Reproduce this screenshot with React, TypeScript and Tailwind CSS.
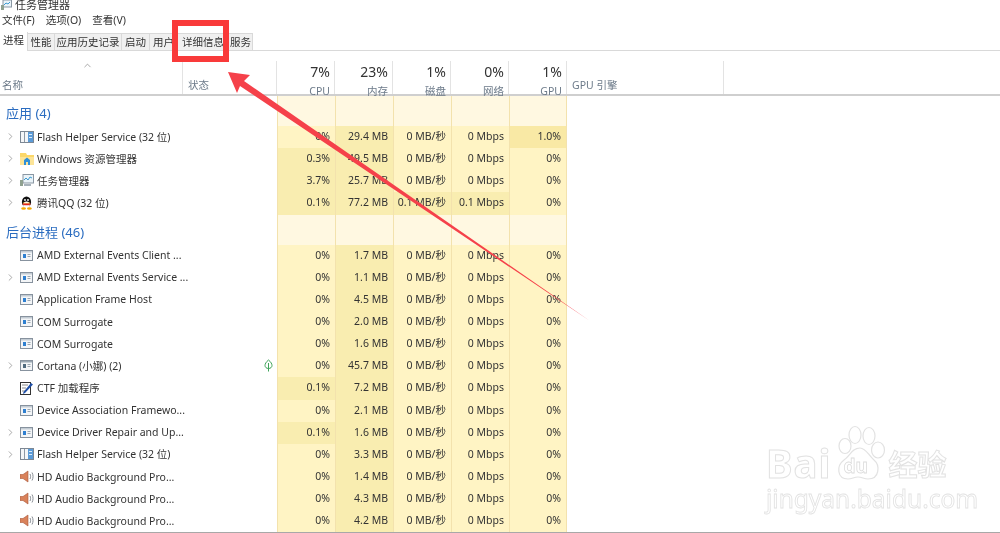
import { ChevronRight, ChevronUp } from "lucide-react";

type IconKind = "flash" | "folder" | "task" | "qq" | "service" | "cortana" | "ctf" | "audio";
type Row = { name: string; icon: IconKind; exp?: boolean; leaf?: boolean; v: string[]; d: number[] };

const apps: Row[] = [
  { name: "Flash Helper Service (32 位)", icon: "flash", exp: true, v: ["0%", "29.4 MB", "0 MB/秒", "0 Mbps", "1.0%"], d: [1, 4] },
  { name: "Windows 资源管理器", icon: "folder", exp: true, v: ["0.3%", "49.5 MB", "0 MB/秒", "0 Mbps", "0%"], d: [0, 1] },
  { name: "任务管理器", icon: "task", exp: true, v: ["3.7%", "25.7 MB", "0 MB/秒", "0 Mbps", "0%"], d: [0, 1] },
  { name: "腾讯QQ (32 位)", icon: "qq", exp: true, v: ["0.1%", "77.2 MB", "0.1 MB/秒", "0.1 Mbps", "0%"], d: [0, 1, 2, 3] },
];

const bg = (name: string, icon: IconKind, cpu: string, mem: string, exp = false, leaf = false): Row => ({
  name,
  icon,
  exp,
  leaf,
  v: [cpu, mem, "0 MB/秒", "0 Mbps", "0%"],
  d: cpu === "0%" ? [1] : [0, 1],
});

const background: Row[] = [
  bg("AMD External Events Client ...", "service", "0%", "1.7 MB"),
  bg("AMD External Events Service ...", "service", "0%", "1.1 MB", true),
  bg("Application Frame Host", "service", "0%", "4.5 MB"),
  bg("COM Surrogate", "service", "0%", "2.0 MB"),
  bg("COM Surrogate", "service", "0%", "1.6 MB"),
  bg("Cortana (小娜) (2)", "cortana", "0%", "45.7 MB", true, true),
  bg("CTF 加载程序", "ctf", "0.1%", "7.2 MB"),
  bg("Device Association Framewo...", "service", "0%", "2.1 MB"),
  bg("Device Driver Repair and Up...", "service", "0.1%", "1.6 MB", true),
  bg("Flash Helper Service (32 位)", "flash", "0%", "3.3 MB", true),
  bg("HD Audio Background Pro...", "audio", "0%", "1.4 MB"),
  bg("HD Audio Background Pro...", "audio", "0%", "4.3 MB"),
  bg("HD Audio Background Pro...", "audio", "0%", "4.2 MB"),
];

const cols = ["w-[58px]", "w-[58px]", "w-[58px]", "w-[58px]", "w-[57px]"];
const tabs = [
  ["进程", "w-[28px]"],
  ["性能", "w-[27px]"],
  ["应用历史记录", "w-[67px]"],
  ["启动", "w-[28px]"],
  ["用户", "w-[28px]"],
  ["详细信息", "w-[51px]"],
  ["服务", "w-[24px]"],
];

function Icon({ kind }: { kind: IconKind }) {
  if (kind === "flash")
    return (
      <svg width="14" height="12" viewBox="0 0 14 12">
        <rect x="0.5" y="0.5" width="13" height="11" fill="#f4f6f8" stroke="#7c8794" />
        <rect x="4" y="1" width="1" height="10" fill="#8d98a5" />
        <rect x="8" y="1" width="5" height="10" fill="#5b9bd8" />
        <rect x="9" y="3" width="3" height="1" fill="#dcebf8" />
        <rect x="9" y="6" width="3" height="1" fill="#dcebf8" />
      </svg>
    );
  if (kind === "folder")
    return (
      <svg width="14" height="13" viewBox="0 0 14 13">
        <path d="M0 1h6l1 2h7v10H0z" fill="#fbd769" />
        <path d="M0 5h14v8H0z" fill="#fce498" />
        <path d="M4 13V8l3-2.5L10 8v5H8v-3H6v3z" fill="#2f8fd8" />
      </svg>
    );
  if (kind === "task")
    return (
      <svg width="14" height="13" viewBox="0 0 14 13">
        <rect x="3" y="0.5" width="10.5" height="8.5" fill="#eaf3f8" stroke="#8a97a3" />
        <path d="M4 6l2-2 2 2 2-3 2 1" fill="none" stroke="#3c9ad0" />
        <rect x="0" y="6" width="3" height="6" fill="#8fa08f" />
        <rect x="4" y="10" width="7" height="2" fill="#a7b2bb" />
      </svg>
    );
  if (kind === "qq")
    return (
      <svg width="13" height="14" viewBox="0 0 13 14">
        <ellipse cx="6.5" cy="6" rx="4.6" ry="5.6" fill="#111" />
        <ellipse cx="6.5" cy="9" rx="3.3" ry="3.4" fill="#fff" />
        <circle cx="5" cy="4" r="0.9" fill="#fff" />
        <circle cx="8" cy="4" r="0.9" fill="#fff" />
        <path d="M3 6.2c2 1 5 1 7 0l-.6 1.4H3.6z" fill="#f5b400" />
        <path d="M2.6 7.4h7.8l.2 1.2-2 .6H4.400l-2-.6z" fill="#e0261c" />
        <ellipse cx="3.600" cy="12.500" rx="2.400" ry="1.300" fill="#f5a800" />
        <ellipse cx="9.400" cy="12.500" rx="2.400" ry="1.300" fill="#f5a800" />
      </svg>
    );
  if (kind === "ctf")
    return (
      <svg width="13" height="14" viewBox="0 0 13 14">
        <rect x="0.500" y="1.500" width="10" height="12" fill="#fff" stroke="#333" />
        <path d="M2 4h6M2 7h4M2 10h3" stroke="#8a8a8a" />
        <path d="M3.500 11L11 2l2 1.500L5 12l-2 1z" fill="#1f4fa8" />
      </svg>
    );
  if (kind === "audio")
    return (
      <svg width="14" height="13" viewBox="0 0 14 13">
        <path d="M0 4.500h3L8 1v11L3 8.500H0z" fill="#d9825b" stroke="#a9583a" strokeWidth="0.600" />
        <path d="M10 4c.8 1.500.8 3.500 0 5M12 2.500c1.400 2.500 1.400 5.500 0 8" fill="none" stroke="#8a8f96" />
      </svg>
    );
  return (
    <svg width="13" height="11" viewBox="0 0 13 11">
      <rect x="0.500" y="0.500" width="12" height="10" fill="#f3f5f7" stroke="#87929e" />
      <rect x="1" y="1" width="11" height="1.500" fill={kind === "cortana" ? "#9aa7b2" : "#c3ccd4"} />
      <rect x="3" y="4" width="3" height="4" fill={kind === "cortana" ? "#4f6a7e" : "#2e7fd0"} />
      <path d="M7.500 4.500h3M7.500 6.500h3" stroke="#9aa5af" />
    </svg>
  );
}

function Leaf() {
  return (
    <svg width="9" height="13" viewBox="0 0 9 13" className="text-[#3fa45a]">
      <path d="M4.500 1C2 3 1 5 1 6.500 1 8.300 2.500 9.500 4.500 9.500S8 8.300 8 6.500C8 5 7 3 4.500 1z" fill="none" stroke="currentColor" />
      <path d="M4.500 4v8.500" stroke="currentColor" />
    </svg>
  );
}

function TableRow({ r }: { r: Row }) {
  return (
    <div className="flex h-[22.15px] text-[10.5px] leading-[20px] text-[#333]">
      <div className="flex w-[277px] items-center pb-[1px]">
        <div className="flex w-[20px] justify-center pl-[1px]">
          {r.exp && <ChevronRight size={11} strokeWidth={1.6} className="text-[#8a8a8a]" />}
        </div>
        <div className="flex w-[17px] justify-start">
          <Icon kind={r.icon} />
        </div>
        <span className="flex-1 truncate">{r.name}</span>
        {r.leaf && (
          <div className="mr-[4px] flex">
            <Leaf />
          </div>
        )}
      </div>
      {r.v.map((val, i) => (
        <div
          key={i}
          className={`${cols[i]} border-l border-[#f3e2ad] pr-[5px] text-right ${
            r.d.includes(i) ? (i === 4 ? "bg-[#f9e9a5]" : "bg-[#f9edb0]") : "bg-[#fff4c4]"
          }`}
        >
          {val}
        </div>
      ))}
      <div className="w-px bg-[#f3e2ad]" />
    </div>
  );
}

function Band({ label }: { label: string }) {
  return (
    <div className="flex h-[30px]">
      <div className="w-[277px] pl-[6px] pt-[7px] text-[13px] leading-[20px] text-[#2a6cc0]">{label}</div>
      {cols.map((c) => (
        <div key={c + label + Math.random()} className={`${c} border-l border-[#f3e2ad] bg-[#fff8e1]`} />
      ))}
      <div className="w-px bg-[#f3e2ad]" />
    </div>
  );
}

function HeadCol({ pct, label, w }: { pct: string; label: string; w: string }) {
  return (
    <div className={`${w} flex flex-col items-end border-r border-[#e3e3e3] pr-[4px] pt-[1px]`}>
      <div className="text-[14px] leading-[20px] text-[#333]">{pct}</div>
      <div className="mt-[1px] text-[10.5px] leading-[16px] text-[#6c7a89]">{label}</div>
    </div>
  );
}

function Watermark() {
  return (
    <div className="absolute left-[766px] top-[424px] flex w-[190px] flex-col text-white">
      <div className="flex items-end">
        <span className="text-[40px] font-bold leading-[46px] tracking-[1px] [-webkit-text-stroke:1px_#e2e2e2]">Bai</span>
        <div className="relative ml-[-1px] h-[62px] w-[56px]">
          <svg width="56" height="62" viewBox="0 0 56 62" className="absolute left-0 top-0">
            <g fill="#fff" stroke="#e2e2e2" strokeWidth="1.200">
              <ellipse cx="14" cy="22" rx="6" ry="7.500" />
              <ellipse cx="24" cy="11" rx="6" ry="8.500" />
              <ellipse cx="38" cy="12" rx="6" ry="8.500" />
              <ellipse cx="47" cy="26" rx="6.500" ry="8" />
              <path d="M29 24c6 0 9 8 14 12 6 5 6 19-6 19-4 0-6-2-10-2s-6 2-10 2C6 55 5 42 13 36c6-4 8-12 16-12z" />
            </g>
          </svg>
          <span className="absolute left-[13px] top-[31px] text-[19px] font-bold leading-[22px] text-white [-webkit-text-stroke:0.8px_#dcdcdc]">du</span>
        </div>
        <span className="ml-[2px] font-['Noto_Sans_CJK_SC'] text-[29px] font-bold leading-[46px] [-webkit-text-stroke:1px_#e2e2e2]">经验</span>
      </div>
      <div className="mt-[-1px] text-[24.5px] leading-[28px] [-webkit-text-stroke:0.8px_#e2e2e2]">jingyan.baidu.com</div>
    </div>
  );
}

export default function App() {
  return (
    <div className="relative h-[533px] w-[1000px] overflow-hidden bg-white font-['Noto_Sans','Noto_Sans_CJK_SC',sans-serif] blur-[0.35px]">
      <div className="flex h-[10px] items-center pl-[1px] text-[11px] text-[#333]">
        <svg width="11" height="10" viewBox="0 0 11 10" className="mr-[3px]">
          <rect x="2" y="0" width="8.500" height="7" fill="#eaf3f8" stroke="#8a97a3" />
          <path d="M3 5l2-2 2 1 2-2" fill="none" stroke="#3c9ad0" />
          <rect x="0" y="5" width="3" height="5" fill="#8fa08f" />
        </svg>
        <span>任务管理器</span>
      </div>
      <div className="mt-[4px] flex h-[14px] items-center gap-[11px] pl-[2px] text-[10.5px] text-[#333]">
        <span>文件(F)</span>
        <span>选项(O)</span>
        <span>查看(V)</span>
      </div>
      <div className="mt-[4px] flex h-[19px] border-b border-[#d9d9d9] text-[10.5px] leading-[17px] text-[#333]">
        {tabs.map(([t, w], i) => (
          <div
            key={t}
            className={`${w} border-r border-[#d9d9d9] text-center ${
              i === 0 ? "mb-[-1px] h-[19px] bg-white" : "mt-[1px] border-t bg-[#f0f0f0]"
            }`}
          >
            {t}
          </div>
        ))}
      </div>
      <div className="flex h-[45px] items-stretch border-b-2 border-[#cfcfcf] pt-[10px]">
        <div className="relative w-[183px] border-r border-[#e3e3e3] pl-[2px] pt-[16px] text-[10.5px] leading-[16px] text-[#6c7a89]">
          名称
          <ChevronUp size={11} strokeWidth={1.6} className="absolute left-[82px] top-[-1px] text-[#8a8a8a]" />
        </div>
        <div className="w-[94px] border-r border-[#e3e3e3] pl-[5px] pt-[16px] text-[10.5px] leading-[16px] text-[#6c7a89]">状态</div>
        <HeadCol pct="7%" label="CPU" w="w-[58px]" />
        <HeadCol pct="23%" label="内存" w="w-[58px]" />
        <HeadCol pct="1%" label="磁盘" w="w-[58px]" />
        <HeadCol pct="0%" label="网络" w="w-[58px]" />
        <HeadCol pct="1%" label="GPU" w="w-[58px]" />
        <div className="w-[157px] border-r border-[#e3e3e3] pl-[5px] pt-[16px] text-[10.5px] leading-[16px] text-[#6c7a89]">GPU 引擎</div>
      </div>
      <Band label="应用 (4)" />
      {apps.map((r) => (
        <TableRow key={r.name} r={r} />
      ))}
      <Band label="后台进程 (46)" />
      {background.map((r, i) => (
        <TableRow key={i} r={r} />
      ))}
      <div className="absolute bottom-0 left-0 h-px w-full bg-[#a8a8a8]" />

      <Watermark />

      <div className="absolute left-[172px] top-[20px] h-[42px] w-[57px] border-[6px] border-[#f93a3a]" />
      <svg width="1000" height="533" viewBox="0 0 1000 533" className="absolute left-0 top-0">
        <path d="M228 72L250 75L244 81L590 321L240 86L237 93Z" fill="#f5414a" />
      </svg>
    </div>
  );
}
